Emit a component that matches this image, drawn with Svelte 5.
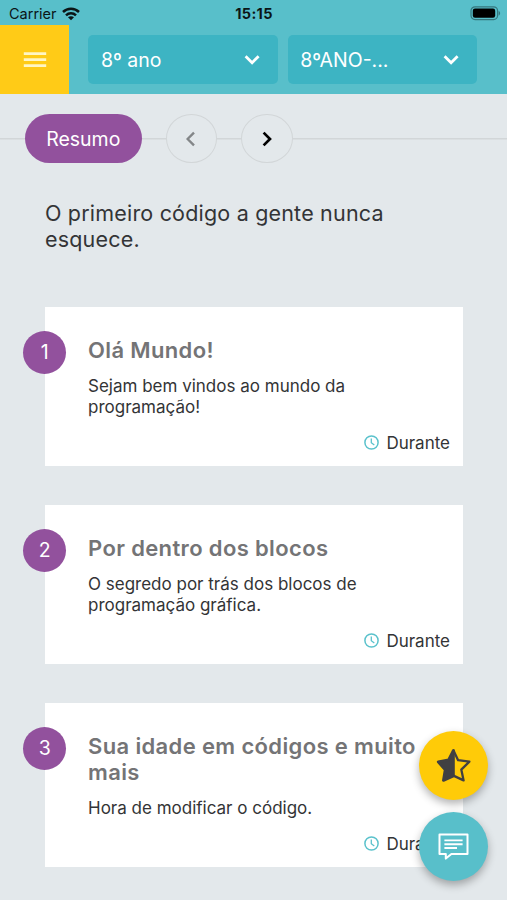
<script lang="ts">
	interface Lesson {
		title: string;
		description: string;
		moment: string;
	}

	const selects = ['8º ano', '8ºANO-...'];

	const lessons: Lesson[] = [
		{
			title: 'Olá Mundo!',
			description: 'Sejam bem vindos ao mundo da programação!',
			moment: 'Durante'
		},
		{
			title: 'Por dentro dos blocos',
			description: 'O segredo por trás dos blocos de programação gráfica.',
			moment: 'Durante'
		},
		{
			title: 'Sua idade em códigos e muito mais',
			description: 'Hora de modificar o código.',
			moment: 'Durante'
		}
	];
</script>

<div class="app">
	<div class="status-bar">
		<div class="carrier">
			<span>Carrier</span>
			<svg width="18" height="14" viewBox="0 0 18 14" fill="none" stroke="#0b1516" stroke-width="2.5">
				<path d="M1 5C5.4.7 12.6.7 17 5" />
				<path d="M4 8.3c2.8-2.7 7.2-2.7 10 0" />
				<path d="M9 13.2 6 10.3c1.6-1.5 4.4-1.5 6 0z" fill="#0b1516" stroke="none" />
			</svg>
		</div>
		<span class="clock">15:15</span>
		<svg class="battery" width="31" height="16" viewBox="0 0 31 16">
			<rect x="1" y="0.8" width="26.6" height="12.8" rx="4" fill="none" stroke="#35777e" stroke-width="1.2" />
			<rect x="2.8" y="2.6" width="22.4" height="9.2" rx="2.2" fill="#000" />
			<path d="M28.6 5c2 .7 2 3.8 0 4.5z" fill="#35777e" />
		</svg>
	</div>

	<header class="header">
		<button class="menu" aria-label="Menu">
			<svg width="24" height="18" viewBox="0 0 24 18" stroke="#fff6c4" stroke-width="2.8">
				<path d="M.8 2.6h22.4M.8 8.7h22.4M.8 14.7h22.4" />
			</svg>
		</button>
		<div class="selects">
			{#each selects as label}
				<button class="select">
					<span>{label}</span>
					<svg width="16" height="11" viewBox="0 0 16 11" fill="none" stroke="#fff" stroke-width="2.8">
						<path d="M1.6 2.2 8.1 8.7l6.5-6.5" />
					</svg>
				</button>
			{/each}
		</div>
	</header>

	<nav class="steps">
		<button class="pill">Resumo</button>
		<button class="arrow previous" aria-label="Anterior">
			<svg width="10" height="16" viewBox="0 0 10 16" fill="none" stroke="currentColor" stroke-width="2.4">
				<path d="M8 1.6 1.6 8 8 14.4" />
			</svg>
		</button>
		<button class="arrow" aria-label="Próximo">
			<svg width="10" height="16" viewBox="0 0 10 16" fill="none" stroke="currentColor" stroke-width="2.7">
				<path d="M1.6 1.6 8 8l-6.4 6.4" />
			</svg>
		</button>
	</nav>

	<main class="content">
		<p class="intro">O primeiro código a gente nunca esquece.</p>

		{#each lessons as lesson, i}
			<article class="card">
				<span class="number">{i + 1}</span>
				<h2 class="title">{lesson.title}</h2>
				<p class="description">{lesson.description}</p>
				<div class="moment">
					<svg width="15" height="15" viewBox="0 0 15 15" fill="none" stroke="#5bc2cc">
						<circle cx="7.5" cy="7.5" r="6.6" stroke-width="1.5" />
						<path d="M7.3 3.6v4.1l3 2.3" stroke-width="1.3" />
					</svg>
					<span>{lesson.moment}</span>
				</div>
			</article>
		{/each}
	</main>

	<div class="actions">
		<button class="fab favorite" aria-label="Favoritar">
			<svg width="36" height="36" viewBox="0 0 36 36" stroke="#414042" stroke-linejoin="round">
				<path
					d="M17.4 2.4 12.6 12 2.2 13.8 9.2 21.8 7.4 32.4 17.4 28z"
					fill="#414042"
					stroke-width="2.8"
				/>
				<path
					d="M17.4 2.2 22.1 12.2 33.4 13.6 25.3 21.6 27.6 32.4 17.4 27.6"
					fill="none"
					stroke-width="2.3"
				/>
			</svg>
		</button>
		<button class="fab chat" aria-label="Mensagens">
			<svg width="32" height="28" viewBox="0 0 32 28" fill="none" stroke="#fff" stroke-linejoin="round">
				<path d="M1.5 1.5h28v19.4H13.4L7.8 25.6v-4.7H1.5z" stroke-width="2" />
				<path d="M6.4 7.4h18.2M6.4 11.2h18.2M6.4 15h12.6" stroke-width="1.9" />
			</svg>
		</button>
	</div>
</div>

<style>
	:global(body) {
		margin: 0;
		overflow: hidden;
	}

	.app {
		position: relative;
		height: 900px;
		overflow: hidden;
		background: #e3e8eb;
		font-family: Inter, 'Liberation Sans', sans-serif;
		color: #333436;
	}

	button {
		padding: 0;
		border: 0;
		font: inherit;
		color: inherit;
	}

	svg {
		display: block;
		flex-shrink: 0;
	}

	.status-bar {
		display: grid;
		grid-template-columns: 1fr auto 1fr;
		align-items: center;
		box-sizing: border-box;
		height: 25px;
		padding: 2px 6px 0 9px;
		background: #58bfca;
		color: #0b1516;
		font-size: 14.5px;
	}

	.carrier {
		display: flex;
		align-items: center;
		gap: 5px;
	}

	.clock {
		margin-right: 2px;
		font-weight: 700;
		letter-spacing: 0.35px;
	}

	.battery {
		justify-self: end;
	}

	.header {
		display: flex;
		height: 69px;
		background: #58bfca;
	}

	.menu {
		display: flex;
		align-items: center;
		justify-content: center;
		width: 69.4px;
		background: #ffcb17;
	}

	.selects {
		display: flex;
		gap: 10px;
		padding: 10px 0 10px 19px;
	}

	.select {
		display: flex;
		align-items: center;
		justify-content: space-between;
		width: 189.3px;
		padding: 0 18px 0 12.5px;
		box-sizing: border-box;
		border-radius: 5px;
		background: #3db4c3;
		color: #fff;
		font-size: 19.5px;
	}

	.steps {
		display: flex;
		gap: 24px;
		height: 50px;
		padding: 20px 25px 0;
		background: linear-gradient(#d2d6d8, #d2d6d8) 0 44px / 100% 1.5px no-repeat;
	}

	.pill {
		width: 116.5px;
		height: 49px;
		border-radius: 25px;
		background: #92519d;
		color: #fff;
		font-size: 19.5px;
	}

	.arrow {
		display: flex;
		align-items: center;
		justify-content: center;
		box-sizing: border-box;
		width: 51.5px;
		height: 49px;
		border: 1.5px solid #d2d6d8;
		border-radius: 50%;
		background: #e3e8eb;
		color: #000;
	}

	.previous {
		color: #838688;
	}

	.content {
		padding: 36px 44px 0 45px;
	}

	.intro {
		width: 370px;
		margin: 0 0 55px;
		font-size: 21.5px;
		line-height: 26px;
		letter-spacing: 0.19px;
	}

	.card {
		position: relative;
		margin-bottom: 39px;
		padding: 30px 13px 12px 43px;
		background: #fff;
	}

	.number {
		position: absolute;
		top: 24.4px;
		left: -21.7px;
		width: 43px;
		height: 43px;
		border-radius: 50%;
		background: #92519d;
		color: #fff;
		font-size: 19.5px;
		line-height: 43px;
		text-align: center;
	}

	.title {
		margin: 0 0 13px;
		color: #747476;
		font-size: 22px;
		font-weight: 600;
		line-height: 26px;
		letter-spacing: 0.36px;
	}

	.description {
		width: 300px;
		margin: 0 0 15px;
		font-size: 17px;
		line-height: 21px;
	}

	.moment {
		display: flex;
		align-items: center;
		justify-content: flex-end;
		gap: 7.5px;
		font-size: 17px;
		line-height: 21px;
	}

	.moment svg {
		margin-bottom: 3px;
	}

	.actions {
		position: absolute;
		top: 731px;
		right: 19px;
		display: flex;
		flex-direction: column;
		gap: 12px;
	}

	.fab {
		display: flex;
		align-items: center;
		justify-content: center;
		width: 69px;
		height: 69px;
		border-radius: 50%;
		box-shadow: 0 4px 8px rgba(0, 0, 0, 0.3);
	}

	.favorite {
		background: #ffcb08;
	}

	.chat {
		background: #58bfca;
	}
</style>
